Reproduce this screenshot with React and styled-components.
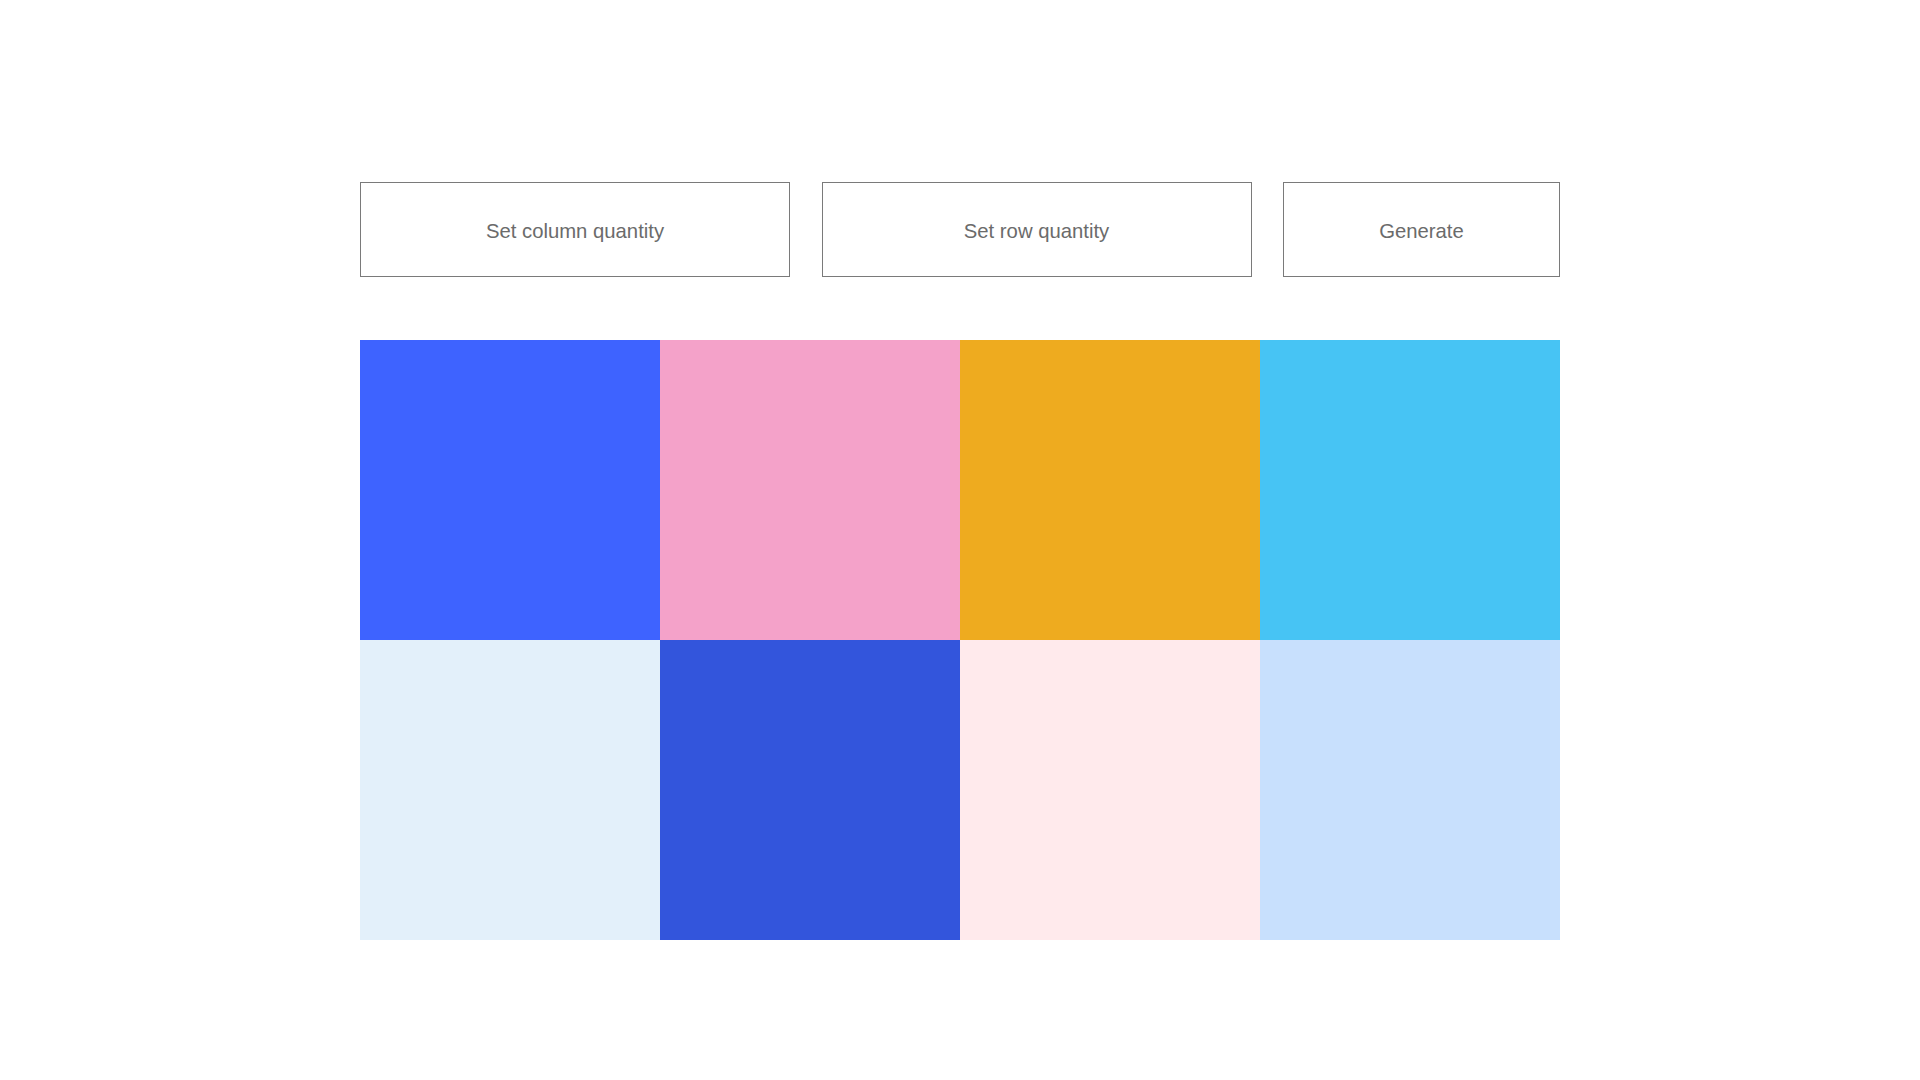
import React from 'react';
import styled, { createGlobalStyle } from 'styled-components';

const GlobalStyle = createGlobalStyle`
  html, body {
    margin: 0;
    padding: 0;
    background: #ffffff;
    font-family: "Liberation Sans", Arial, Helvetica, sans-serif;
  }
`;

const Page = styled.div`
  width: 1200px;
  margin: 0 auto;
  padding-top: 182px;
  display: flex;
  flex-direction: column;
  gap: 63px;
`;

const Controls = styled.div`
  display: grid;
  grid-template-columns: 430px 430px 277px;
  justify-content: space-between;
`;

const ControlButton = styled.button`
  height: 95px;
  box-sizing: border-box;
  border: 1px solid #7a7a7a;
  background: #ffffff;
  color: #6b6b6b;
  font-family: "Liberation Sans", Arial, Helvetica, sans-serif;
  font-size: 20.3px;
  cursor: pointer;
  padding: 3px 0 0 0;
`;

const Grid = styled.div`
  display: grid;
  grid-template-columns: repeat(${props => props.$cols}, 300px);
  grid-auto-rows: 300px;
`;

const Cell = styled.div`
  background: ${props => props.$color};
`;

const colors = [
  '#3e63ff', '#f4a2c9', '#eeab1f', '#47c4f4',
  '#e3f0fa', '#3355dc', '#ffeaec', '#c8e0fd',
];

const App = () => (
  <>
    <GlobalStyle />
    <Page>
      <Controls>
        <ControlButton>Set column quantity</ControlButton>
        <ControlButton>Set row quantity</ControlButton>
        <ControlButton>Generate</ControlButton>
      </Controls>
      <Grid $cols={4}>
        {colors.map((c, i) => (
          <Cell key={i} $color={c} />
        ))}
      </Grid>
    </Page>
  </>
);

export default App;
